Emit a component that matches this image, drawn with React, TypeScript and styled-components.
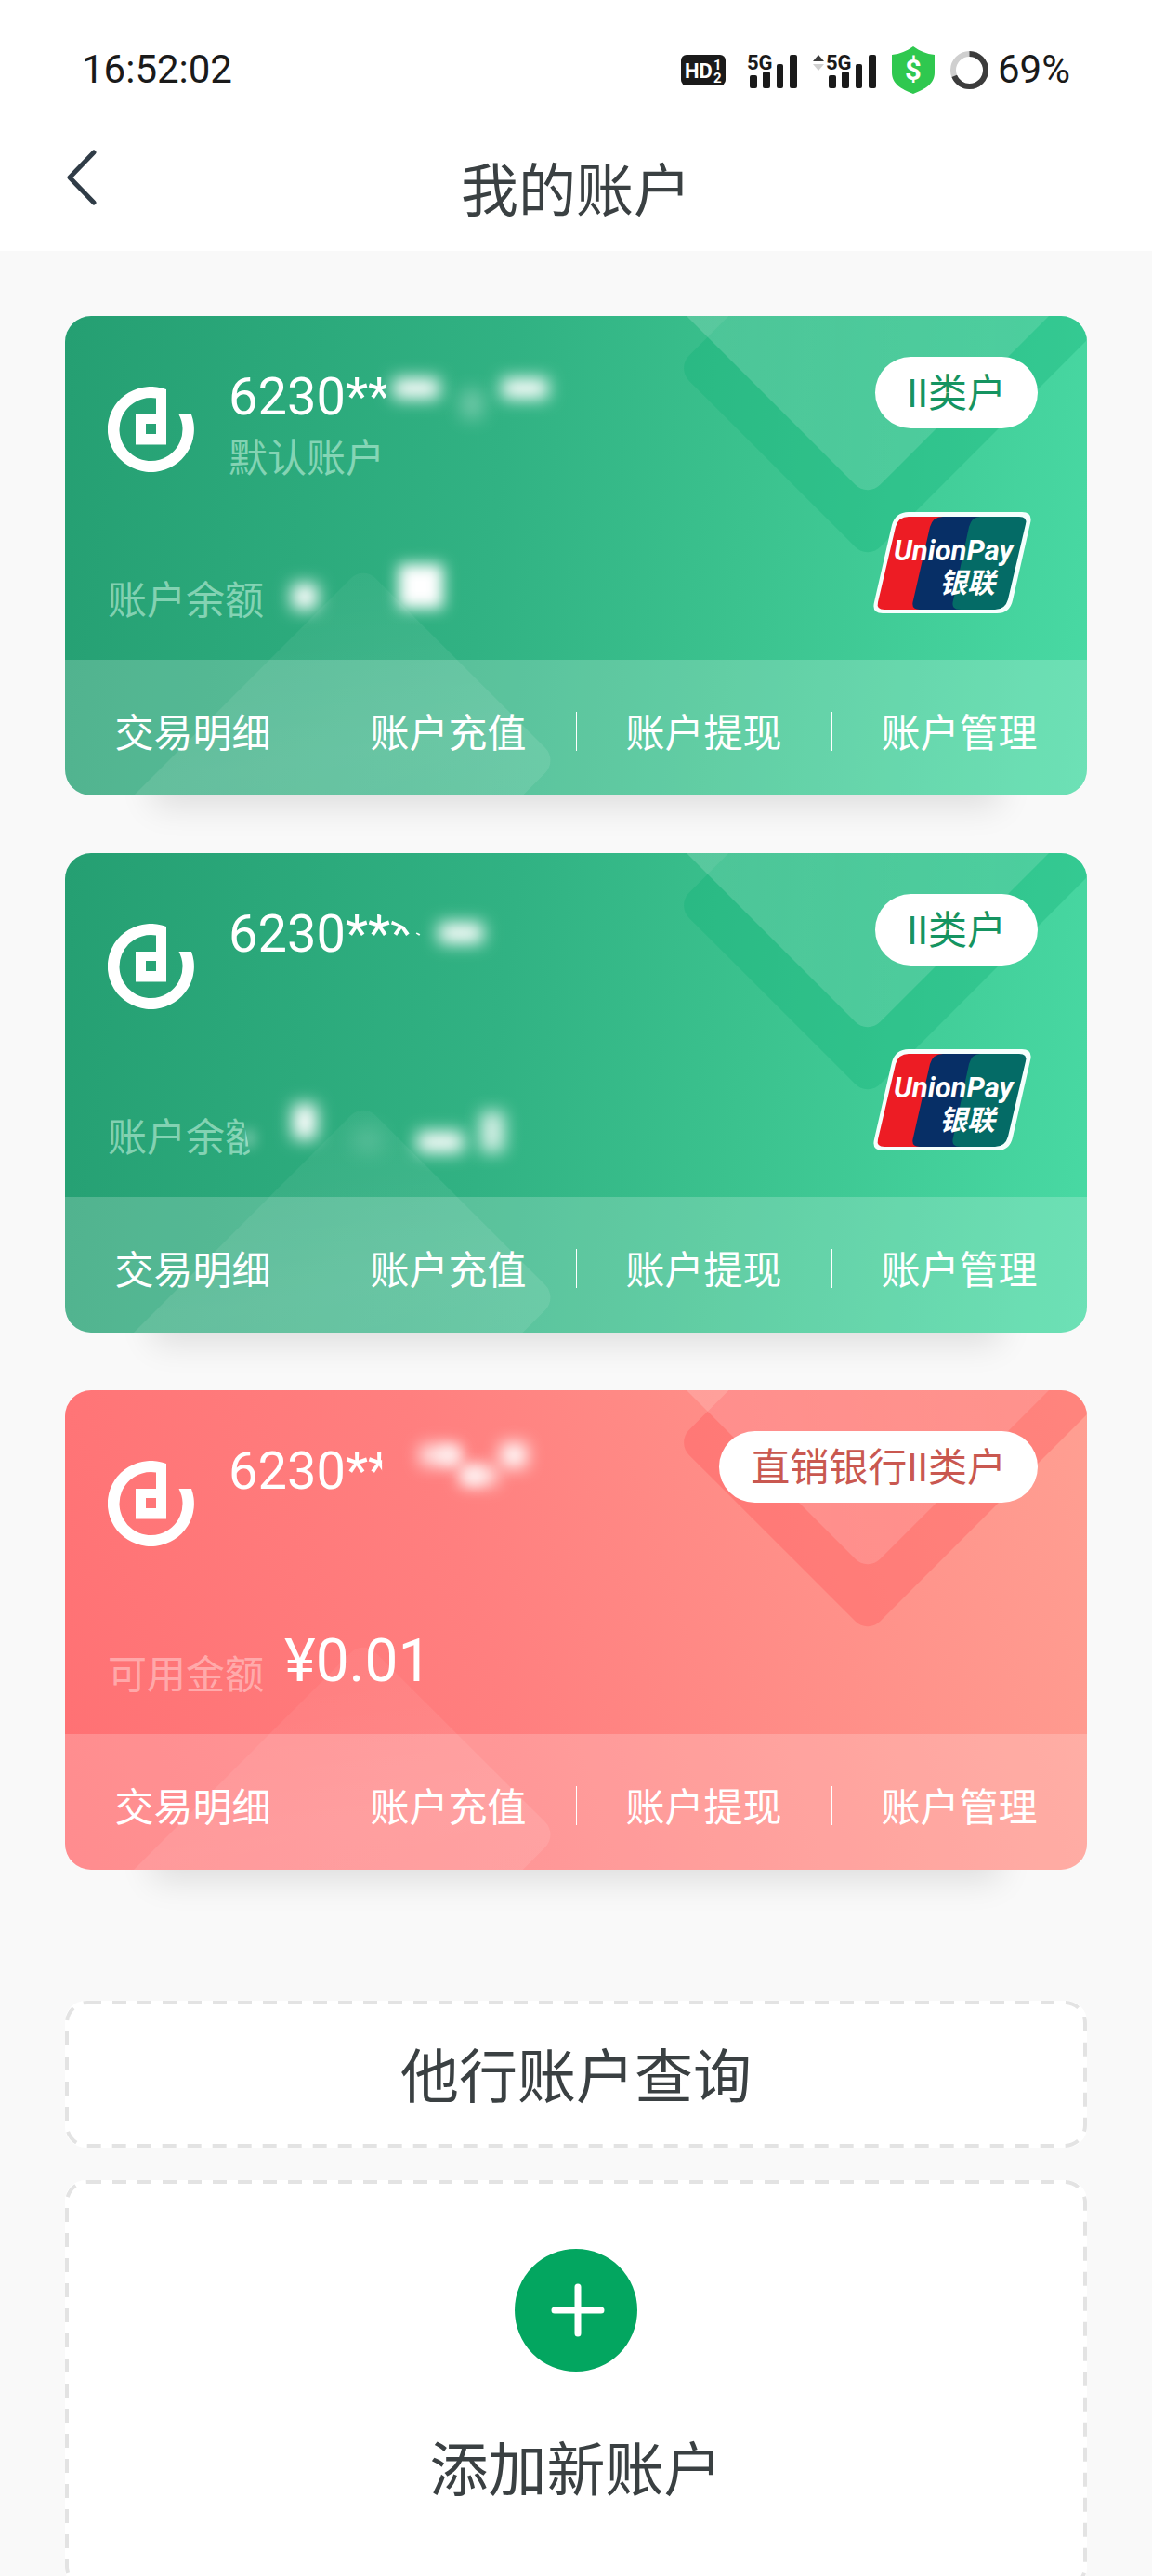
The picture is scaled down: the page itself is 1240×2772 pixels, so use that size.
import React from 'react';
import styled, { createGlobalStyle } from 'styled-components';

const GlobalStyle = createGlobalStyle`
  *, *::before, *::after { box-sizing: border-box; }
  body {
    margin: 0;
    background: #f9f9f9;
    color: #3a4042;
    font-family: Roboto, "Noto Sans CJK SC", sans-serif;
  }
  button {
    margin: 0;
    padding: 0;
    border: 0;
    background: none;
    color: inherit;
    font: inherit;
    cursor: pointer;
  }
`;

type Tone = 'green' | 'coral';

interface Smudge {
  x: number;
  y: number;
  w: number;
  h: number;
  blur: number;
  opacity?: number;
}

interface Account {
  id: string;
  tone: Tone;
  number: string;
  numberClip?: string;
  note?: string;
  badge: string;
  balanceLabel: string;
  balanceClip?: string;
  balance?: string;
  unionPay: boolean;
  smudges: Smudge[];
}

const tones = {
  green: {
    fill: 'linear-gradient(98deg, #259f72 0%, #31b283 42%, #3bc28e 65%, #49daa4 100%)',
    badge: '#159461',
    shade: '#12b277',
    shadeOpacity: 0.34,
    muted: 'rgba(222, 255, 238, 0.5)',
  },
  coral: {
    fill: 'linear-gradient(72deg, #ff7073 0%, #ff7f7f 42%, #ff9089 72%, #ff9f92 100%)',
    badge: '#c95850',
    shade: '#ff5a5c',
    shadeOpacity: 0.38,
    muted: 'rgba(255, 255, 255, 0.4)',
  },
};

const accounts: Account[] = [
  {
    id: 'default',
    tone: 'green',
    number: '6230**',
    numberClip: 'inset(0 5px 0 0)',
    note: '默认账户',
    badge: 'II类户',
    balanceLabel: '账户余额',
    unionPay: true,
    smudges: [
      { x: 353, y: 67, w: 50, h: 22, blur: 9 },
      { x: 470, y: 67, w: 50, h: 22, blur: 9 },
      { x: 427, y: 80, w: 22, h: 30, blur: 10, opacity: 0.35 },
      { x: 244, y: 288, w: 28, h: 28, blur: 9 },
      { x: 359, y: 267, w: 48, h: 48, blur: 8 },
    ],
  },
  {
    id: 'second',
    tone: 'green',
    number: '6230****',
    numberClip: 'polygon(0 0, 162px 0, 162px 12px, 208px 34px, 208px 100%, 0 100%)',
    badge: 'II类户',
    balanceLabel: '账户余额',
    balanceClip: 'polygon(0 0, 144px 0, 156px 100%, 0 100%)',
    unionPay: true,
    smudges: [
      { x: 402, y: 75, w: 48, h: 22, blur: 9 },
      { x: 245, y: 270, w: 26, h: 38, blur: 9 },
      { x: 311, y: 296, w: 30, h: 26, blur: 11, opacity: 0.16 },
      { x: 379, y: 300, w: 50, h: 22, blur: 9 },
      { x: 447, y: 278, w: 26, h: 44, blur: 9, opacity: 0.8 },
      { x: 192, y: 298, w: 12, h: 18, blur: 7, opacity: 0.4 },
    ],
  },
  {
    id: 'direct',
    tone: 'coral',
    number: '6230**',
    numberClip: 'inset(0 9px 0 0)',
    badge: '直销银行II类户',
    balanceLabel: '可用金额',
    balance: '¥0.01',
    unionPay: false,
    smudges: [
      { x: 382, y: 59, w: 42, h: 22, blur: 9, opacity: 0.85 },
      { x: 404, y: 60, w: 22, h: 20, blur: 7, opacity: 0.6 },
      { x: 425, y: 82, w: 40, h: 20, blur: 9, opacity: 0.85 },
      { x: 428, y: 82, w: 22, h: 20, blur: 7, opacity: 0.6 },
      { x: 469, y: 57, w: 28, h: 26, blur: 9 },
    ],
  },
];

const actions = ['交易明细', '账户充值', '账户提现', '账户管理'];

const Shell = styled.div`
  display: flex;
  flex-direction: column;
  height: 100vh;
  overflow: hidden;
`;

const Header = styled.header`
  flex: none;
  background: #fff;
`;

const StatusBar = styled.div`
  display: flex;
  align-items: center;
  justify-content: space-between;
  height: 140px;
  padding: 10px 88px 0;
  color: #1a1a1a;
  font-size: 42px;
  line-height: 50px;
`;

const StatusIcons = styled.div`
  display: flex;
  align-items: center;
  gap: 17px;

  svg { display: block; }
`;

const Battery = styled.span`
  display: flex;
  align-items: center;
  gap: 10px;
`;

const TitleBar = styled.div`
  display: grid;
  grid-template-columns: 140px 1fr 140px;
  height: 130px;
`;

const BackButton = styled.button`
  display: flex;
  align-items: center;
  height: 102px;
  padding-left: 70px;
`;

const Title = styled.h1`
  margin: 0;
  padding-top: 3px;
  text-align: center;
  font-size: 62px;
  font-weight: 400;
  line-height: 127px;
`;

const Content = styled.main`
  flex: 1;
  min-height: 0;
  padding: 70px;
  overflow-y: auto;
  scrollbar-width: none;
`;

const CardList = styled.div`
  display: grid;
  gap: 62px;
  margin-bottom: 141px;
`;

const Card = styled.article<{ $tone: Tone }>`
  position: relative;
  border-radius: 28px;
  background: ${({ $tone }) => tones[$tone].fill};
  box-shadow: 0 106px 34px -94px rgba(0, 0, 0, 0.11);
  color: #fff;
`;

const Pattern = styled.div`
  position: absolute;
  inset: 0;
  overflow: hidden;
  border-radius: 28px;
  pointer-events: none;

  svg { position: absolute; top: 0; }
  svg:first-child { left: 0; }
  svg:last-child { right: 0; }
`;

const SmudgeLayer = styled.svg`
  position: absolute;
  top: 0;
  left: 0;
  pointer-events: none;
`;

const CardBody = styled.div`
  position: relative;
  display: flex;
  flex-direction: column;
  justify-content: space-between;
  min-height: 370px;
  padding: 44px 53px 33px 46px;
`;

const CardTop = styled.div`
  display: flex;
  align-items: flex-start;
`;

const BankLogo = styled.svg`
  flex: none;
  margin: 32px 37px 0 0;
`;

const Identity = styled.div`
  flex: 1;
  padding-top: 10px;
`;

const CardNumber = styled.div<{ $clip?: string }>`
  width: fit-content;
  clip-path: ${({ $clip }) => $clip ?? 'none'};
  font-size: 56px;
  line-height: 66px;
`;

const Note = styled.div<{ $tone: Tone }>`
  color: ${({ $tone }) => tones[$tone].muted};
  font-size: 42px;
  line-height: 68px;
`;

const Badge = styled.span<{ $tone: Tone }>`
  flex: none;
  padding: 2px 34px 0;
  border-radius: 39px;
  background: #fff;
  color: ${({ $tone }) => tones[$tone].badge};
  font-size: 42px;
  line-height: 75px;
`;

const CardBottom = styled.div`
  display: flex;
  align-items: flex-end;
`;

const BalanceLabel = styled.span<{ $tone: Tone; $clip?: string }>`
  margin-right: 22px;
  clip-path: ${({ $clip }) => $clip ?? 'none'};
  color: ${({ $tone }) => tones[$tone].muted};
  font-size: 42px;
  line-height: 60px;
`;

const Balance = styled.span`
  margin-bottom: 7px;
  font-size: 64px;
  line-height: 76px;
`;

const NetworkLogo = styled.svg`
  margin: 0 7px 17px auto;
`;

const Actions = styled.nav`
  position: relative;
  display: grid;
  grid-template-columns: repeat(4, 1fr);
  height: 146px;
  border-radius: 0 0 28px 28px;
  background: rgba(255, 255, 255, 0.2);
`;

const Action = styled.button`
  padding-top: 14px;
  font-size: 42px;
  line-height: 60px;

  & + & {
    background: linear-gradient(#fff, #fff) left 56px / 1px 42px no-repeat;
  }
`;

const DashedButton = styled.button`
  position: relative;
  display: flex;
  flex-direction: column;
  align-items: center;
  width: 100%;
  margin-bottom: 35px;
  padding: 36px 0 28px;
  border-radius: 22px;
  background: #fff;
  font-size: 63px;
  line-height: 94px;
`;

const AddButton = styled(DashedButton)`
  padding: 74px 0 80px;
  gap: 60px;
`;

const DashFrame = styled.svg`
  position: absolute;
  inset: 0;
  width: 100%;
  height: 100%;
  overflow: visible;

  rect {
    width: calc(100% - 4px);
    height: calc(100% - 4px);
  }
`;

const Dashes = () => (
  <DashFrame aria-hidden="true">
    <rect x="2" y="2" rx="22" fill="none" stroke="#e3e3e3" strokeWidth="4" strokeDasharray="15 12" />
  </DashFrame>
);

const HdIcon = () => (
  <svg width="54" height="34" viewBox="0 0 54 34" aria-hidden="true">
    <rect x="0" y="1" width="48" height="33" rx="6" fill="#1a1a1a" />
    <g fill="#fff" fontFamily="Roboto, sans-serif" fontWeight="700">
      <text x="4" y="26" fontSize="22">HD</text>
      <text x="35" y="17" fontSize="15">1</text>
      <text x="35" y="31" fontSize="15">2</text>
    </g>
  </svg>
);

const SignalIcon = ({ arrows = false }: { arrows?: boolean }) => {
  const left = arrows ? 14 : 0;
  return (
    <svg
      width={54 + left}
      height="46"
      viewBox={`0 -6 ${54 + left} 46`}
      overflow="visible"
      aria-hidden="true"
    >
      {arrows && (
        <>
          <path d="M6 1 12 8H0Z" fill="#3c3c3c" />
          <path d="M6 18 12 11H0Z" fill="#d0d0d0" />
        </>
      )}
      <g transform={`translate(${left} 0)`} fill="#1a1a1a">
        <text x="0" y="17" fontFamily="Roboto, sans-serif" fontSize="22" fontWeight="700">5G</text>
        <rect x="3" y="23" width="8" height="14" rx="2" />
        <rect x="17" y="19" width="8" height="18" rx="2" />
        <rect x="32" y="11" width="7" height="26" rx="2" />
        <rect x="46" y="1" width="8" height="36" rx="2" />
      </g>
    </svg>
  );
};

const ShieldIcon = () => (
  <svg width="46" height="51" viewBox="0 0 46 51" aria-hidden="true">
    <path d="M23 0C30 5 37 8 46 9V28C46 40 36 46 23 51C10 46 0 40 0 28V9C9 8 16 5 23 0Z" fill="#2fc84f" />
    <text x="23" y="36" textAnchor="middle" fill="#fff" fontFamily="Roboto, sans-serif" fontSize="31" fontWeight="700">$</text>
  </svg>
);

const BatteryRing = () => (
  <svg width="41" height="41" viewBox="0 0 41 41" aria-hidden="true">
    <circle cx="20.5" cy="20.5" r="17.5" fill="none" stroke="#cfcfcf" strokeWidth="6" />
    <circle
      cx="20.5"
      cy="20.5"
      r="17.5"
      fill="none"
      stroke="#3c3c3c"
      strokeWidth="6"
      pathLength="100"
      strokeDasharray="69 31"
      transform="rotate(-90 20.5 20.5)"
    />
  </svg>
);

const CardPattern = ({ tone }: { tone: Tone }) => (
  <Pattern aria-hidden="true">
    <svg width="560" height="516" viewBox="0 0 560 516">
      <defs>
        <linearGradient id={`rise-${tone}`} x1="0" y1="0" x2="1" y2="1">
          <stop offset="0" stopColor="#fff" stopOpacity="0.04" />
          <stop offset="0.4" stopColor="#fff" stopOpacity="0.1" />
          <stop offset="1" stopColor="#fff" stopOpacity="0.06" />
        </linearGradient>
      </defs>
      <rect width="296" height="420" rx="19" transform="translate(321 269) rotate(45)" fill={`url(#rise-${tone})`} />
    </svg>
    <svg width="460" height="300" viewBox="640 0 460 300">
      <defs>
        <linearGradient id={`fold-${tone}`} x1="0" y1="1" x2="1" y2="0">
          <stop offset="0" stopColor="#fff" stopOpacity="0.17" />
          <stop offset="1" stopColor="#fff" stopOpacity="0.12" />
        </linearGradient>
      </defs>
      <rect
        x="-291"
        y="-420"
        width="291"
        height="420"
        rx="19"
        transform="translate(864 262) rotate(45)"
        fill={tones[tone].shade}
        fillOpacity={tones[tone].shadeOpacity}
      />
      <rect x="-360" y="-360" width="360" height="360" rx="19" transform="translate(864 195) rotate(45)" fill={`url(#fold-${tone})`} />
    </svg>
  </Pattern>
);

const UnionPayLogo = () => (
  <NetworkLogo width="170" height="109" viewBox="0 0 170 109" role="img" aria-label="UnionPay 银联">
    <path d="M38 0H160Q172 0 169 12L150 95Q147 109 133 109H10Q-2 109 1 97L20 14Q24 0 38 0Z" fill="#f5fffd" />
    <path d="M38 5H75L58 105H12Q3 105 5 97L24 16Q27 5 38 5Z" fill="#ed1c24" />
    <path d="M75 5H115L98 105H50Q40 105 43 95L61 16Q64 5 75 5Z" fill="#072f66" />
    <path d="M115 5H157Q166 5 164 13L145 94Q142 105 131 105H94Q83 105 86 95L103 16Q106 5 115 5Z" fill="#046b66" />
    <g fill="#fff" fontStyle="italic" fontWeight="700">
      <text x="22" y="52" fontFamily="Roboto, sans-serif" fontSize="31">UnionPay</text>
      <text x="71" y="87" fontFamily="'Noto Sans CJK SC', sans-serif" fontSize="30">银联</text>
    </g>
  </NetworkLogo>
);

const AccountCard = ({ account }: { account: Account }) => (
  <Card $tone={account.tone}>
    <CardPattern tone={account.tone} />
    <CardBody>
      <CardTop>
        <BankLogo width="93" height="92" viewBox="0 0 93 92" role="img" aria-label="银行标志">
          <path
            d="M63 3A46.5 46 0 1 0 90 30H76.5A34 34 0 1 1 52 12.5V30H30V62.5H63ZM41 40H52V51H41Z"
            fill="#fff"
            fillRule="evenodd"
          />
        </BankLogo>
        <Identity>
          <CardNumber $clip={account.numberClip}>{account.number}</CardNumber>
          {account.note && <Note $tone={account.tone}>{account.note}</Note>}
        </Identity>
        <Badge $tone={account.tone}>{account.badge}</Badge>
      </CardTop>
      <CardBottom>
        <BalanceLabel $tone={account.tone} $clip={account.balanceClip}>{account.balanceLabel}</BalanceLabel>
        {account.balance && <Balance>{account.balance}</Balance>}
        {account.unionPay && <UnionPayLogo />}
      </CardBottom>
    </CardBody>
    <Actions aria-label="账户操作">
      {actions.map((label) => (
        <Action key={label} type="button">{label}</Action>
      ))}
    </Actions>
    <SmudgeLayer width="560" height="370" viewBox="0 0 560 370" aria-hidden="true">
      <defs>
        {account.smudges.map((s, i) => (
          <filter key={i} id={`soft-${account.id}-${i}`} x="-100%" y="-150%" width="300%" height="400%">
            <feGaussianBlur stdDeviation={s.blur} />
          </filter>
        ))}
      </defs>
      {account.smudges.map((s, i) => (
        <rect
          key={i}
          x={s.x}
          y={s.y}
          width={s.w}
          height={s.h}
          rx="4"
          fill="#fff"
          opacity={s.opacity ?? 1}
          filter={`url(#soft-${account.id}-${i})`}
        />
      ))}
    </SmudgeLayer>
  </Card>
);

export default function App() {
  return (
    <>
      <GlobalStyle />
      <Shell>
        <Header>
          <StatusBar>
            <time>16:52:02</time>
            <StatusIcons>
              <HdIcon />
              <SignalIcon />
              <SignalIcon arrows />
              <ShieldIcon />
              <Battery>
                <BatteryRing />
                69%
              </Battery>
            </StatusIcons>
          </StatusBar>
          <TitleBar>
            <BackButton type="button" aria-label="返回">
              <svg width="36" height="60" viewBox="0 0 36 60" aria-hidden="true">
                <path d="M31 3 5 30 31 57" fill="none" stroke="#303c47" strokeWidth="5" strokeLinecap="round" strokeLinejoin="round" />
              </svg>
            </BackButton>
            <Title>我的账户</Title>
          </TitleBar>
        </Header>
        <Content>
          <CardList>
            {accounts.map((account) => (
              <AccountCard key={account.id} account={account} />
            ))}
          </CardList>
          <DashedButton type="button">
            <Dashes />
            他行账户查询
          </DashedButton>
          <AddButton type="button">
            <Dashes />
            <svg width="132" height="132" viewBox="0 0 132 132" aria-hidden="true">
              <circle cx="66" cy="66" r="66" fill="#03a660" />
              <path d="M43 66H93M68 41V91" stroke="#fff" strokeWidth="7" strokeLinecap="round" />
            </svg>
            添加新账户
          </AddButton>
        </Content>
      </Shell>
    </>
  );
}
